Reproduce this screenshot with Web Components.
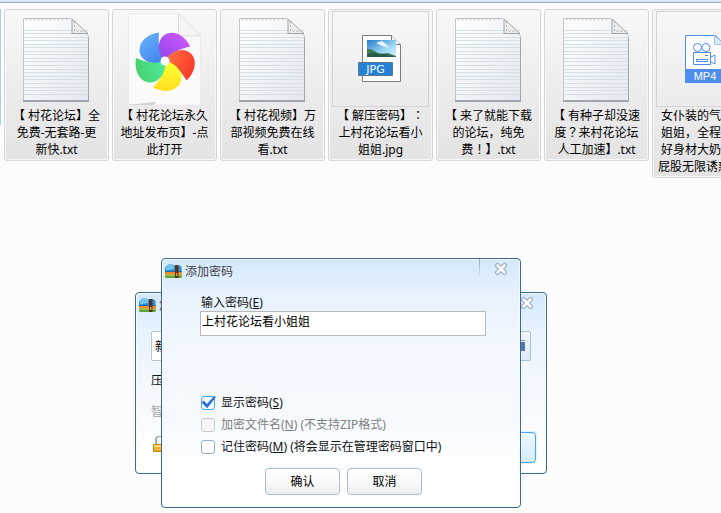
<!DOCTYPE html>
<html lang="zh-CN">
<head>
<meta charset="utf-8">
<title>添加密码</title>
<style>
html, body { margin: 0; height: 100%; overflow: hidden; background: #fcfcfc; }
body { font: 12px/17px "Noto Sans", "Noto Sans CJK SC", sans-serif; color: #000; text-spacing-trim: space-all; }
</style>
</head>
<body>
<file-desktop></file-desktop>

<template id="t-desktop">
<style>
:host { display: block; position: relative; height: 100%; overflow: hidden; }
.edge { height: 2px; background: #dde8f6; border-bottom: 1px solid #96abcd; }
.files { display: flex; gap: 3px; padding-top: 6px; align-items: flex-start; }
.prev { flex: none; width: 1px; height: 116px; background: #a8cffa; }
.mid { font-family: "Noto Sans CJK TC", sans-serif; line-height: 1; }
.back { position: absolute; left: 135px; top: 292px; width: 412px; height: 182px; }
.front { position: absolute; left: 161px; top: 258px; width: 360px; height: 250px; }
</style>
<div class="edge"></div>
<div class="files">
  <div class="prev"></div>
  <file-tile kind="txt">【 村花论坛】全<br>免费-无套路-更<br>新快.txt</file-tile>
  <file-tile kind="web">【 村花论坛永久<br>地址发布页】-点<br>此打开</file-tile>
  <file-tile kind="txt">【 村花视频】万<br>部视频免费在线<br>看.txt</file-tile>
  <file-tile kind="jpg">【 解压密码】<span class="mid" lang="zh-TW">：</span><br>上村花论坛看小<br>姐姐.jpg</file-tile>
  <file-tile kind="txt">【 来了就能下载<br>的论坛，纯免<br>费<span class="mid" lang="zh-TW">！</span>】.txt</file-tile>
  <file-tile kind="txt">【 有种子却没速<br>度<span class="mid" lang="zh-TW">？</span>来村花论坛<br>人工加速】.txt</file-tile>
  <file-tile kind="mp4" class="cut">女仆装的气<br>姐姐，全程<br>好身材大奶<br>屁股无限诱惑</file-tile>
</div>
<zip-window class="back"><span slot="title">您</span><archive-form></archive-form></zip-window>
<zip-window class="front" active><span slot="title">添加密码</span><password-form></password-form></zip-window>
</template>

<template id="t-tile">
<style>
:host { display: block; flex: none; box-sizing: border-box; width: 105px; border: 1px solid #d6d6d6; border-radius: 3px; background: linear-gradient(#f8f8f8, #e3e3e3); box-shadow: inset 0 0 0 1px #f7f7f7; padding: 1px 3px 2px; text-align: center; white-space: nowrap; }
.pic { box-sizing: border-box; height: 96px; border: 1px solid transparent; }
:host([kind=jpg]) .pic, :host([kind=mp4]) .pic { border-color: #d3d3d3; }
:host(.cut) .name { width: 66px; margin-left: 2px; }
svg { display: block; width: 95px; height: 94px; }
svg text { font-family: "DejaVu Sans", sans-serif; }
</style>
<div class="pic"></div>
<div class="name"><slot></slot></div>
</template>

<template id="t-window">
<style>
:host { display: flex; flex-direction: column; box-sizing: border-box; border: 1px solid #3e6a92; border-radius: 4px; overflow: hidden; color: #111; background: linear-gradient(#d3e8fc 0, #e8f3fe 38px, #f3f8fe 90px, #f6faff 65%, #fff 90%); box-shadow: inset 0 0 0 1px #f4faff; }
header { display: flex; align-items: flex-start; height: 25px; padding: 0 12px 0 3px; flex: none; }
.logo { width: 17px; height: 15px; margin-top: 5px; flex: none; }
.title { flex: 1; margin: 4px 0 0 3px; color: #444; }
i { width: 1px; height: 18px; margin-right: 14px; background: linear-gradient(#8ea9c4, #d8e8f8); }
:host(:not([active])) i { display: none; }
button { border: 0; padding: 0; background: none; width: 14px; height: 14px; margin-top: 3px; }
button svg { display: block; }
</style>
<header>
<svg class="logo" viewBox="0 0 17 15"><path d="M1 2.500 3.500.500h4L9 1.500h6L16.500 3v6H0V4z" fill="#2b8fd6"/><path d="M1 3 3.500 1h4L9 2v3L1 6.500z" fill="#74c4f0"/><path d="M0 7h17v1.500H0z" fill="#1c6db4"/><path d="M0 8h17v3H0z" fill="#f08c25"/><path d="M0 10.500h17V13l-1 1H1l-1-1z" fill="#57a63c"/><path d="M0 10.500h17v1H0z" fill="#e4cf45"/><path d="M10 1h3.500v13H10z" fill="#5b301f"/><path d="M11 9h1.500v3H11z" fill="#d7a068"/></svg>
<span class="title"><slot name="title"></slot></span><i></i>
<button aria-label="关闭"><svg width="14" height="14"><path d="m3.500 3.500 7 7m0-7-7 7" stroke="#9cb0c4" stroke-width="5" stroke-linecap="round"/><path d="m3.500 3.500 7 7m0-7-7 7" stroke="#fafcff" stroke-width="2.600" stroke-linecap="round"/></svg></button>
</header>
<slot></slot>
</template>

<template id="t-password">
<style>
:host { display: flex; flex-direction: column; flex: 1; padding: 10px 34px 12px 38px; }
label { display: block; padding-left: 1px; }
input[type=text] { box-sizing: border-box; width: 100%; height: 25px; margin: 0; border: 1px solid #bababa; background: #fff; padding: 0 1px 6px; font: inherit; color: #000; outline: 0; display: block; }
.checks { display: grid; gap: 5px; margin-top: 58px; }
.checks label { display: flex; align-items: center; gap: 6px; }
input[type=checkbox] { appearance: none; box-sizing: border-box; width: 14px; height: 14px; margin: 0; border: 1px solid #9aafc6; border-radius: 3px; background: #fdfeff; position: relative; }
input[type=checkbox]:checked { border-color: #4ba1f0; background: #f2faff; }
input[type=checkbox]:disabled { border-color: #c8c8c8; background: #f6f6f6; }
input:checked::after { content: ""; position: absolute; inset: -2px; background: #2f70d8; clip-path: polygon(10% 50%, 24% 38%, 43% 60%, 88% 9%, 100% 15%, 45% 86%); }
.off { color: #808080; }
.buttons { display: flex; gap: 7px; margin: 13px 0 0 65px; }
.buttons button { box-sizing: border-box; width: 75px; height: 27px; padding: 0; border: 1px solid #a9bfd6; border-radius: 4px; background: linear-gradient(#fff, #fafafa 50%, #ededed); font: inherit; color: #000; }
</style>
<label for="pw">输入密码(<u>E</u>)</label>
<input id="pw" type="text" value="上村花论坛看小姐姐">
<div class="checks">
<label><input type="checkbox" checked><span>显示密码(<u>S</u>)</span></label>
<label class="off"><input type="checkbox" disabled><span>加密文件名(<u>N</u>) (不支持ZIP格式)</span></label>
<label><input type="checkbox"><span>记住密码(<u>M</u>) (将会显示在管理密码窗口中)</span></label>
</div>
<div class="buttons"><button>确认</button><button>取消</button></div>
</template>

<template id="t-archive">
<style>
:host { display: block; padding: 13px 10px 10px 15px; }
.row { display: flex; height: 30px; margin-right: 5px; }
input { flex: 1; min-width: 0; box-sizing: border-box; border: 1px solid #b6c5d6; border-radius: 2px; padding: 0 3px; font: inherit; background: #fff; }
.browse { width: 32px; border: 1px solid #aabfd6; border-radius: 2px; background: linear-gradient(#f2f8ff, #deebf8); padding: 0 5px 0 0; display: flex; align-items: center; justify-content: flex-end; }
p { margin: 11px 0 0; }
p.dim { margin-top: 14px; color: #a6a6a6; }
.foot { display: flex; justify-content: space-between; align-items: flex-start; margin-top: 12px; }
.foot svg { margin: 4px 0 0 2px; }
.go { width: 90px; height: 31px; border: 1px solid #4da3f5; border-radius: 4px; background: linear-gradient(#eef7ff, #d8ecfe); box-shadow: 0 0 2px #9bd0ff; }
</style>
<div class="row"><input aria-label="文件名" value="新"><button class="browse" aria-label="浏览"><svg width="10" height="12"><path d="M0 0h10v1H0z" fill="#7896bd"/><path d="M0 2h10v9H0z" fill="#5478ad"/></svg></button></div>
<p>压</p><p class="dim">智</p>
<div class="foot"><svg width="14" height="17"><path d="M3 9V4a4 4 0 0 1 8 0v5" fill="none" stroke="#a9a9a9" stroke-width="2"/><path d="M.5 8.500h13v7H.5z" fill="#f6b52e" stroke="#bc8117"/><path d="M1 9h12v2H1z" fill="#ffd978"/></svg><button class="go" aria-label="立即压缩"></button></div>
</template>

<script>
const note = `<svg viewBox="0 0 95 94"><defs><linearGradient id="g" x2="1" y2="1"><stop stop-color="#fff"/><stop offset=".5" stop-color="#f3f4f8"/><stop offset="1" stop-color="#e6e7ef"/></linearGradient></defs>
<path d="M14.500 6.500H62L79.500 24v65h-65z" fill="url(#g)" stroke="#c3c5c9"/><path d="M14 89h66" stroke="#8b939e" stroke-width="1.500"/><path d="M79.500 26v63" stroke="#a2a5ab"/>
<path d="${[18,21,25,28,32,35,39,42,46,49,53,57,60,64,67,71,75,78,82].map(y => `M15 ${y}.500h64`).join('')}" stroke="#d3e0e8" fill="none"/>
<path d="M17 7h44" stroke="#b5b5b5" stroke-width="2" stroke-dasharray="1 3"/>
<path d="M63 7v14.500H79z" fill="#ededee" stroke="#a0a2a5"/><path d="M65.500 9v10H76" fill="none" stroke="#a9a9a9" stroke-dasharray="2 2"/></svg>`;
const petals = ['#6ab4fd,#4588ee','#d85cfb,#9a48f0','#f92c26,#ff6a3c','#ffd21c,#ffff2e','#42cc65,#50e795'];
const pinwheel = `<svg viewBox="0 0 95 94"><defs>${petals.map((p,i)=>{const[a,b]=p.split(',');return `<linearGradient id="p${i}" x1="0" y1="0" x2=".6" y2="1"><stop stop-color="${a}"/><stop offset="1" stop-color="${b}"/></linearGradient>`}).join('')}</defs>
<path d="M11.500 1.500h50L83.500 24v69h-72z" fill="#fafafb" stroke="#ececee"/><path d="M61.500 1.500V24h22z" fill="#f5f5f5" stroke="#dcdcdc"/><path d="M12 92c9 1 20-2 27-2l-2 3H12z" fill="#d2d2d2"/>
${[0,1,2,3,4].map(i=>`<path transform="translate(48 49) rotate(${i*72})" d="M0 0C-9 5-24 2-25.500-10C-26-20-17-27-6-28.500C-7-17-6-8 0 0z" fill="url(#p${i})"/>`).join('')}
<circle cx="48" cy="49" r="4.500" fill="#fff"/></svg>`;
const jpg = `<svg viewBox="0 0 95 94"><defs><linearGradient id="s" x2="1" y2="1"><stop stop-color="#247bcc"/><stop offset=".6" stop-color="#9bd8f6"/><stop offset="1" stop-color="#e2f4fb"/></linearGradient></defs>
<path d="M29.500 23.500h29l9 9v37h-38z" fill="#fff" stroke="#7c7c7c"/><path d="M58.500 23.500v9h9" fill="#fff" stroke="#7c7c7c"/>
<path d="M34 28h29v17H34z" fill="url(#s)"/><path d="m43 31 6-2 4 3 3 4-7-2z" fill="#e4f5fc"/><path d="M34 37c5 0 8 2 12 5l9-1 8 3v1H34z" fill="#397a5b"/><path d="M34 42c9-2 18 0 29 3H34z" fill="#285d49"/>
<path d="M25.500 50.500h34v13h-34z" fill="#2381da" stroke="#677687"/><text x="42.500" y="61" font-size="11" text-anchor="middle" fill="#fff">JPG</text></svg>`;
const mp4 = `<svg viewBox="0 0 95 94"><path d="M28.500 23.500h30l9 9v38h-39z" fill="#fff" stroke="#4d8df0"/><path d="M57.500 23.500v9h10z" fill="#dae8fd" stroke="#a5c6f8"/>
<g fill="none" stroke="#4d8df0" stroke-width="1"><circle cx="40.500" cy="35.500" r="4"/><circle cx="49" cy="35.500" r="4"/><path d="M36.500 40.500h17v12h-17zM39.500 47.500h11v2h-11zM54 45l4-2v9l-4-2"/><path d="M48 43.500h3"/></g>
<path d="M28 57h40v14H28z" fill="#4d8df0"/><text x="48" y="68" font-size="11" text-anchor="middle" fill="#fff" style="font-family:'Liberation Sans'">MP4</text></svg>`;
const art = { txt: note, web: pinwheel, jpg, mp4 };

class Templated extends HTMLElement {
  constructor() {
    super();
    this.attachShadow({ mode: 'open' }).append(document.getElementById(this.constructor.tpl).content.cloneNode(true));
  }
}
customElements.define('file-tile', class extends Templated {
  static tpl = 't-tile';
  connectedCallback() { this.shadowRoot.querySelector('.pic').innerHTML = art[this.getAttribute('kind')]; }
});
customElements.define('zip-window', class extends Templated { static tpl = 't-window'; });
customElements.define('password-form', class extends Templated { static tpl = 't-password'; });
customElements.define('archive-form', class extends Templated { static tpl = 't-archive'; });
customElements.define('file-desktop', class extends Templated { static tpl = 't-desktop'; });
</script>
</body>
</html>
